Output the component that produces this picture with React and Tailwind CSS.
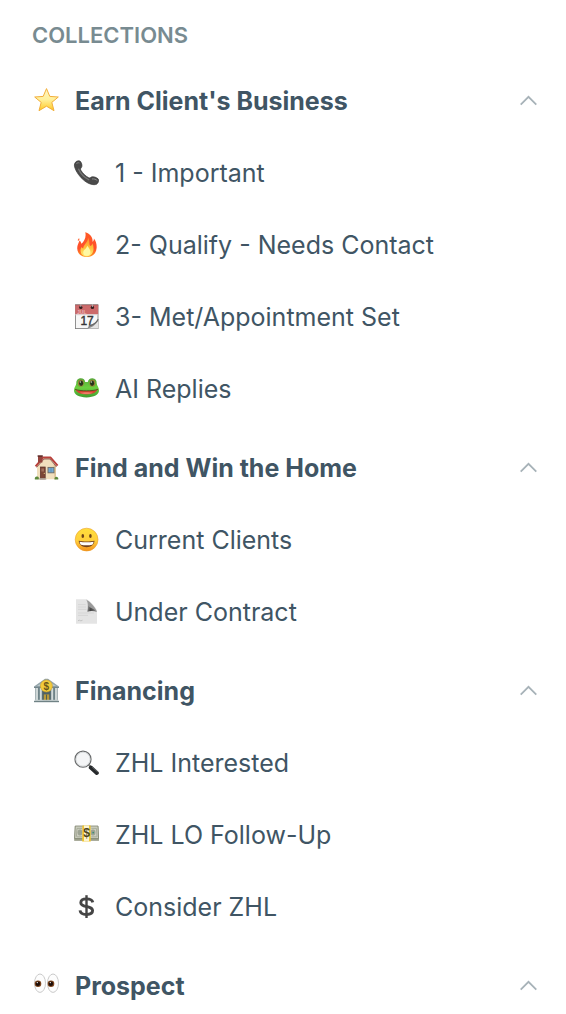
import { useState } from "react";

const GROUPS = [
  {
    name: "Earn Client's Business",
    icon: StarIcon,
    items: [
      { name: "1 - Important", icon: PhoneIcon },
      { name: "2- Qualify - Needs Contact", icon: FireIcon },
      { name: "3- Met/Appointment Set", icon: CalendarIcon },
      { name: "AI Replies", icon: FrogIcon },
    ],
  },
  {
    name: "Find and Win the Home",
    icon: HouseIcon,
    items: [
      { name: "Current Clients", icon: SmileIcon },
      { name: "Under Contract", icon: PageIcon },
    ],
  },
  {
    name: "Financing",
    icon: BankIcon,
    items: [
      { name: "ZHL Interested", icon: MagnifierIcon },
      { name: "ZHL LO Follow-Up", icon: CashIcon },
      { name: "Consider ZHL", icon: DollarIcon },
    ],
  },
  { name: "Prospect", icon: EyesIcon, items: [] },
];

export default function App() {
  return (
    <nav className="bg-white font-['Inter',sans-serif] text-[#405564]" aria-label="Collections">
      <h2 className="px-8 pt-[19px] pb-[22px] text-[22px] leading-8 font-semibold text-[#788b91]">COLLECTIONS</h2>
      <div className="flex flex-col gap-[15px]">
        {GROUPS.map((g) => (
          <Group key={g.name} group={g} />
        ))}
      </div>
    </nav>
  );
}

function Group({ group }) {
  const [open, setOpen] = useState(true);
  const Icon = group.icon;
  return (
    <section>
      <button
        type="button"
        aria-expanded={open}
        onClick={() => setOpen(!open)}
        className="flex h-14 w-full cursor-pointer items-center gap-4 pr-7 pl-[33px] text-left text-[25px] leading-9 font-bold"
      >
        <Icon />
        <span className="grow">{group.name}</span>
        <Chevron open={open} />
      </button>
      {open && group.items.length > 0 && (
        <ul className="pt-2">
          {group.items.map(({ name, icon: ItemIcon }) => (
            <li key={name}>
              <a href="#" className="flex h-[72px] items-center gap-4 pr-7 pl-[73px] text-[25px] leading-9">
                <ItemIcon />
                <span>{name}</span>
              </a>
            </li>
          ))}
        </ul>
      )}
    </section>
  );
}

function Chevron({ open }) {
  return (
    <svg
      viewBox="0 0 18 12"
      className={open ? "h-3 w-[18px] shrink-0" : "h-3 w-[18px] shrink-0 rotate-180"}
      fill="none"
      stroke="#a7b2b8"
      strokeWidth="1.8"
      aria-hidden="true"
    >
      <path d="M0.7 9.6 L8.5 1.8 L16.3 9.6" />
    </svg>
  );
}

// Every row icon is drawn on the same 26 unit square.
function Glyph({ children }) {
  return (
    <svg viewBox="0 0 26 26" className="size-[26px] shrink-0" aria-hidden="true">
      {children}
    </svg>
  );
}

function StarIcon() {
  return (
    <Glyph>
      <defs>
        <linearGradient id="star" x1="0" y1="0" x2="0" y2="1">
          <stop offset="0" stopColor="#fff6c4" />
          <stop offset="0.5" stopColor="#fff09a" />
          <stop offset="1" stopColor="#ffc823" />
        </linearGradient>
      </defs>
      <path
        d="M13.5 0.6 L16.8 8.4 L25.3 9 L18.8 14.4 L21 22.7 L13.5 18.2 L6 22.7 L8.2 14.4 L1.7 9 L10.2 8.4 Z"
        fill="url(#star)" stroke="#f2ae3a" strokeWidth="1" strokeLinejoin="round"
      />
    </Glyph>
  );
}

function PhoneIcon() {
  return (
    <Glyph>
      <path
        d="M2 3 C3 1 6 0 7.5 1.5 C9 3.5 9.5 6.5 8.2 7.8 C7.5 8.6 7.2 9.2 8 10.5 C9.6 13.2 12.5 16 15.4 17.6 C16.6 18.2 17.2 17.8 18 17.2 C19.8 16.2 23 17 25 18.8 C26.2 20.2 25.5 23 23.6 24.2 C20.8 25.4 16 24.3 11.5 20.8 C6.6 17 3.3 12 1.8 7.6 C1.2 5.8 1.3 4.2 2 3 Z"
        fill="#4a4a4a" stroke="#333" strokeWidth="0.7"
      />
      <path d="M5.4 8.7 C7.4 13.4 11.4 17.5 16.2 20" fill="none" stroke="#777" strokeWidth="1.3" />
      <path d="M3.3 4 C4 2.8 5.4 2.4 6.4 3" fill="none" stroke="#858585" strokeWidth="1" />
      <path d="M19 19 C21 18.7 23 19.3 24.3 20.6" fill="none" stroke="#8a8a8a" strokeWidth="1" />
    </Glyph>
  );
}

function FireIcon() {
  return (
    <Glyph>
      <defs>
        <linearGradient id="fire" x1="0" y1="0" x2="0" y2="1">
          <stop offset="0" stopColor="#ff5a24" />
          <stop offset="0.65" stopColor="#ff4f2c" />
          <stop offset="1" stopColor="#ff9a1c" />
        </linearGradient>
        <linearGradient id="flame" x1="0" y1="0" x2="0" y2="1">
          <stop offset="0" stopColor="#ff8a2c" />
          <stop offset="0.55" stopColor="#ffc03b" />
          <stop offset="1" stopColor="#fff07a" />
        </linearGradient>
      </defs>
      <path
        d="M12.2 0.3 C17 1.6 20 5.2 19.6 10 C20.6 9.2 21 7.8 20.9 6.4 C23 9 23.9 12.4 23.6 16 C23.2 21.5 19.4 25 13.9 25 C8 25 4.3 21.4 4.2 16.2 C4.2 13 5.6 11 6.6 8.4 C7.6 9.2 8.2 10.4 8.4 11.8 C11.2 9.6 13.6 4.6 12.2 0.3 Z"
        fill="url(#fire)"
      />
      <path d="M6.2 6.2 C5 6.8 4.5 8 5 9 C6.2 8.6 6.8 7.4 6.2 6.2 Z" fill="#ff6a3a" />
      <path
        d="M15 5.4 C17.2 9.4 15.8 11.8 17.2 14 C18.8 13.2 19.4 12.2 19.6 11.2 C20.9 15.2 21 19 19 21.8 C17.6 23.7 15.8 24.4 13.8 24.4 C9.9 24.4 7.4 22 7.5 18.4 C7.6 16.8 8 15.8 8.6 15 C9.2 15.8 9.6 16.2 10.2 16.5 C10.2 12.5 15.2 10.4 15 5.4 Z"
        fill="url(#flame)"
      />
      <path d="M14.2 13.8 C15.8 16 17.6 17.8 17.4 20.4 C17.2 22.8 15.8 23.8 13.8 23.8 C11.6 23.8 10.2 22.4 10.2 20.4 C10.4 17.8 13.8 16.6 14.2 13.8 Z" fill="#fff9a4" />
    </Glyph>
  );
}

function CalendarIcon() {
  return (
    <Glyph>
      <rect x="2.4" y="0.9" width="22.6" height="23.7" fill="#f7f7f7" stroke="#777" strokeWidth="0.8" />
      <rect x="2.2" y="1" width="23" height="9.4" fill="#cc6a6b" />
      <path d="M2.2 0.8 H25.2" stroke="#8a5252" strokeWidth="0.6" />
      <path d="M2.2 10.8 H25.2" stroke="#dadada" strokeWidth="0.8" />
      <text x="4" y="9.8" fontSize="5" fontWeight="700" fill="#e9b4b2" fontFamily="Liberation Sans, sans-serif">JUL</text>
      <circle cx="7.8" cy="3.4" r="1.7" fill="#351f20" />
      <circle cx="19.4" cy="3.4" r="1.7" fill="#351f20" />
      <path d="M7.8 0 V3 M19.4 0 V3" stroke="#b6b6b6" strokeWidth="0.9" />
      <text x="7.4" y="21.2" fontSize="12" fontWeight="400" fill="#373737" stroke="#373737" strokeWidth="0.4" fontFamily="Liberation Sans, sans-serif">17</text>
      <path d="M14.2 24.5 C15.6 22.8 16 21.6 17.5 20.5 C20 20.3 23 18.6 25.2 15 V24.6 Z" fill="#8c8c8c" />
      <path d="M14.2 24.6 C18 24.1 22.4 21.3 25.2 16.8 V24.6 Z" fill="#e4e4e4" />
      <path d="M15.7 22 C19.6 21.7 23 19.2 25.2 15.3" fill="none" stroke="#666" strokeWidth="1.1" />
    </Glyph>
  );
}

function FrogIcon() {
  return (
    <Glyph>
      <defs>
        <linearGradient id="frog" x1="0" y1="0" x2="0" y2="1">
          <stop offset="0" stopColor="#57a83b" />
          <stop offset="0.5" stopColor="#6cd03f" />
          <stop offset="1" stopColor="#3f9c2e" />
        </linearGradient>
      </defs>
      <path
        d="M7.8 2.2 C10.4 2.2 12 3.8 12.2 6 H14.8 C15.2 3.8 16.8 2.2 19.4 2.2 C22.4 2.3 23.8 4.4 23.7 7.2 C23.8 9.6 26 11 26 14.6 C26 18.8 21 21.4 13.5 21.4 C6 21.4 1 18.8 1 14.6 C1 11 3.2 9.6 3.3 7.2 C3.2 4.4 4.8 2.2 7.8 2.2 Z"
        fill="url(#frog)"
      />
      <ellipse cx="7.8" cy="7.2" rx="2.9" ry="3.4" fill="#9b8236" />
      <ellipse cx="19.4" cy="7.2" rx="2.9" ry="3.4" fill="#9b8236" />
      <ellipse cx="8.1" cy="7.2" rx="2" ry="2.7" fill="#26341c" />
      <ellipse cx="19.1" cy="7.2" rx="2" ry="2.7" fill="#26341c" />
      <circle cx="7.4" cy="6" r="0.7" fill="#c9d8bf" />
      <circle cx="18.4" cy="6" r="0.7" fill="#c9d8bf" />
      <path d="M2.4 13.6 C7 15.6 20 15.6 24.6 13.6 C22.6 17.4 18.5 18.4 13.5 18.4 C8.5 18.4 4.4 17.4 2.4 13.6 Z" fill="#d8412f" />
      <path d="M2 13.3 C7 15.3 20 15.3 25 13.3" fill="none" stroke="#5a4a1c" strokeWidth="0.9" />
      <path d="M7 16.8 C10 16 17 16 20 16.8 C17 18.4 10 18.4 7 16.8 Z" fill="#ef7d68" />
    </Glyph>
  );
}

function HouseIcon() {
  return (
    <Glyph>
      <path d="M4 10.6 L11 3 H17 L23 10.6 V24.2 H4 Z" fill="#f1dfbd" />
      <path d="M20.6 9 L23 11 V24.2 H21.4 Z" fill="#dfc69c" />
      <path d="M2.6 11.4 L10 2.6 H17.6 L24.6 10.6" fill="none" stroke="#b9403b" strokeWidth="2" strokeLinejoin="round" />
      <path d="M3.6 12.4 L11 4 L17 4 L23.6 12" fill="none" stroke="#6e3a35" strokeWidth="0.7" />
      <rect x="5" y="0.9" width="4.4" height="6.6" fill="#94433c" />
      <rect x="4.6" y="0.3" width="5.2" height="1.5" fill="#5e2c29" />
      <rect x="7.4" y="12" width="4.8" height="12" fill="#7c4635" stroke="#5b3028" strokeWidth="0.7" />
      <rect x="8.4" y="13.5" width="2.6" height="3" fill="#a1705b" />
      <circle cx="11.3" cy="18.4" r="0.6" fill="#e2c17c" />
      <rect x="15" y="12.4" width="6" height="5.4" fill="#74a9d2" stroke="#6d6a63" strokeWidth="0.9" />
      <path d="M18 12.8 V17.6" stroke="#537f9f" strokeWidth="0.6" />
      <rect x="6" y="23.2" width="7.3" height="1.4" fill="#b9b2a5" />
      <path d="M1.8 24.2 C1.5 22.2 3 21.2 4.2 21.6 C5.6 21.6 6.2 22.8 5.8 24.4 H2 Z" fill="#5e8a3d" />
      <path d="M21.5 24.4 C21.2 22.8 22.4 21.6 23.8 21.9 C25.2 22.1 25.6 23.2 25.2 24.4 Z" fill="#5e8a3d" />
    </Glyph>
  );
}

function SmileIcon() {
  return (
    <Glyph>
      <defs>
        <linearGradient id="smile" x1="0" y1="0" x2="0" y2="1">
          <stop offset="0" stopColor="#ffdf3a" />
          <stop offset="0.55" stopColor="#ffcf3c" />
          <stop offset="1" stopColor="#f4921d" />
        </linearGradient>
      </defs>
      <circle cx="13.6" cy="12.6" r="11.4" fill="url(#smile)" stroke="#eba02c" strokeWidth="0.6" />
      <ellipse cx="9.8" cy="9" rx="1.3" ry="2" fill="#6d4318" />
      <ellipse cx="17.4" cy="9" rx="1.3" ry="2" fill="#6d4318" />
      <path d="M5.7 13.8 C10 14.8 17 14.8 21.5 13.8 C21.2 18 17.8 20.2 13.6 20.2 C9.4 20.2 6 18 5.7 13.8 Z" fill="#73421c" />
      <path d="M6.6 14.7 C10.5 15.5 16.5 15.5 20.6 14.7 C20.3 16.3 19.8 17.2 19.2 17.8 C16 18.5 11 18.5 8 17.8 C7.3 17.2 6.9 16 6.6 14.7 Z" fill="#fff" />
    </Glyph>
  );
}

function PageIcon() {
  return (
    <Glyph>
      <defs>
        <linearGradient id="curl" x1="0" y1="0.5" x2="1" y2="0.7">
          <stop offset="0" stopColor="#8a8a8a" />
          <stop offset="0.35" stopColor="#444" />
          <stop offset="1" stopColor="#8a8a8a" />
        </linearGradient>
      </defs>
      <path d="M3 0.3 H13.5 C17 2 23 8 24 12 V24.8 H3 Z" fill="#e4e4e4" />
      <path d="M5 5.6 H12.6 M5 8 H13 M5 10.4 H13.4 M5 14 H21 M5 16.4 H15" stroke="#d2d2d2" strokeWidth="0.8" />
      <path d="M5 21.8 L6.6 21 L7.6 22 L9.5 21.2" fill="none" stroke="#b5b5b5" strokeWidth="0.7" />
      <path d="M13 0.4 C14.8 2.4 15.2 5 14.6 12.4 C18 10.4 22 10.8 24 12.8 C22.5 8 17 2.4 13 0.4 Z" fill="#9a9a9a" />
      <path d="M15 6.6 C15.2 8.6 15 10.4 14.4 12.8 C17 11.6 21 11.6 24 13.1 C21.4 9.4 18 10.2 15 6.6 Z" fill="url(#curl)" />
    </Glyph>
  );
}

function BankIcon() {
  return (
    <Glyph>
      <path d="M1 8.4 L12 0.8 H15 L26 8.4 V9.8 H1 Z" fill="#93a4a9" />
      <path d="M4 8 L13.5 1.8 L23 8 Z" fill="#bcc8ca" />
      <path d="M1 9.4 H26" stroke="#667980" strokeWidth="0.9" />
      <rect x="2.4" y="9.8" width="22.2" height="12.2" fill="#6f8388" />
      <path d="M4 10 V22 M7.8 10 V22 M19.2 10 V22 M23 10 V22" stroke="#d3dbdb" strokeWidth="1.9" />
      <rect x="9.4" y="12" width="8.2" height="10.4" fill="#4f6166" />
      <rect x="10.8" y="16.4" width="5.4" height="6" fill="#b8993a" />
      <path d="M13.5 16.6 V22.4" stroke="#52604e" strokeWidth="1" />
      <rect x="1.6" y="21.8" width="23.8" height="1.1" fill="#c2cccd" />
      <rect x="1" y="22.9" width="25" height="1.3" fill="#6f8285" />
      <circle cx="13.4" cy="8" r="6" fill="#f3cb3b" stroke="#cfa12a" strokeWidth="0.6" />
      <text x="13.4" y="11.6" fontSize="10" fontWeight="700" textAnchor="middle" fill="#6a5618" fontFamily="Liberation Sans, sans-serif">$</text>
    </Glyph>
  );
}

function MagnifierIcon() {
  return (
    <Glyph>
      <path d="M15.6 14.6 L19 18" stroke="#8c8c8c" strokeWidth="2" />
      <path d="M17.8 17.6 L23.8 23" stroke="#26292b" strokeWidth="4" strokeLinecap="round" />
      <path d="M19.4 17.2 L24.4 21.6" stroke="#6d7173" strokeWidth="0.9" strokeLinecap="round" />
      <circle cx="10" cy="9.2" r="8" fill="#f4f5f6" stroke="#67696a" strokeWidth="1.2" />
      <circle cx="10" cy="9.2" r="7" fill="none" stroke="#d0d4d6" strokeWidth="0.8" />
    </Glyph>
  );
}

function CashIcon() {
  return (
    <Glyph>
      <path d="M2 4.2 H25.2 L26 18.8 H1.2 Z" fill="#8f937f" />
      <path d="M2.2 4 H25 L25.6 16.6 H1.6 Z" fill="#cbcdbf" stroke="#7f846f" strokeWidth="0.8" />
      <path d="M1.4 17.8 H25.8" stroke="#a7aa96" strokeWidth="0.8" />
      <path d="M4 6.4 H9 M4 14.8 H9 M18.4 6.4 H23.4 M18.4 14.8 H23.8 M4 6.4 L3.4 14.8 M23.4 6.4 L24 14.8" stroke="#a0a492" strokeWidth="0.8" />
      <ellipse cx="7" cy="10.6" rx="2.4" ry="3" fill="#9da393" />
      <ellipse cx="20" cy="10.6" rx="2.4" ry="3" fill="#9da393" />
      <circle cx="20.2" cy="10.6" r="0.9" fill="#3d8c76" />
      <path d="M9.4 3.4 H17.6 L17.8 19.4 H9.2 Z" fill="#f1c52e" />
      <path d="M11 3.4 H16 V19.4 H11 Z" fill="#fbf3d0" />
      <text x="13.5" y="14.8" fontSize="12" fontWeight="700" textAnchor="middle" fill="#4d4520" fontFamily="Liberation Sans, sans-serif">$</text>
    </Glyph>
  );
}

function DollarIcon() {
  return (
    <Glyph>
      <path d="M13.5 1.2 V24" stroke="#454545" strokeWidth="2.4" />
      <path
        d="M19.8 8.4 C19.2 6 17 4.9 13.6 4.9 C10.2 4.9 7.8 6.2 7.8 8.7 C7.8 11.3 10.4 11.9 13.6 12.5 C17 13.2 19.6 13.9 19.6 16.6 C19.6 19.2 17 20.5 13.6 20.5 C9.8 20.5 7.4 19.2 7 16.4"
        fill="none" stroke="#454545" strokeWidth="2.9"
      />
    </Glyph>
  );
}

function EyesIcon() {
  return (
    <Glyph>
      <EyeShape x={7} />
      <EyeShape x={20} />
    </Glyph>
  );
}

function EyeShape({ x }) {
  return (
    <g>
      <ellipse cx={x} cy="10.2" rx="5.5" ry="9.2" fill="#fdfdfd" stroke="#c4c4c4" strokeWidth="0.9" />
      <circle cx={x - 2} cy="10.8" r="3.3" fill="#7b431c" />
      <circle cx={x - 2.1} cy="10.8" r="2.2" fill="#1c0d08" />
      <circle cx={x - 2.7} cy="9.6" r="0.7" fill="#fff" />
    </g>
  );
}
